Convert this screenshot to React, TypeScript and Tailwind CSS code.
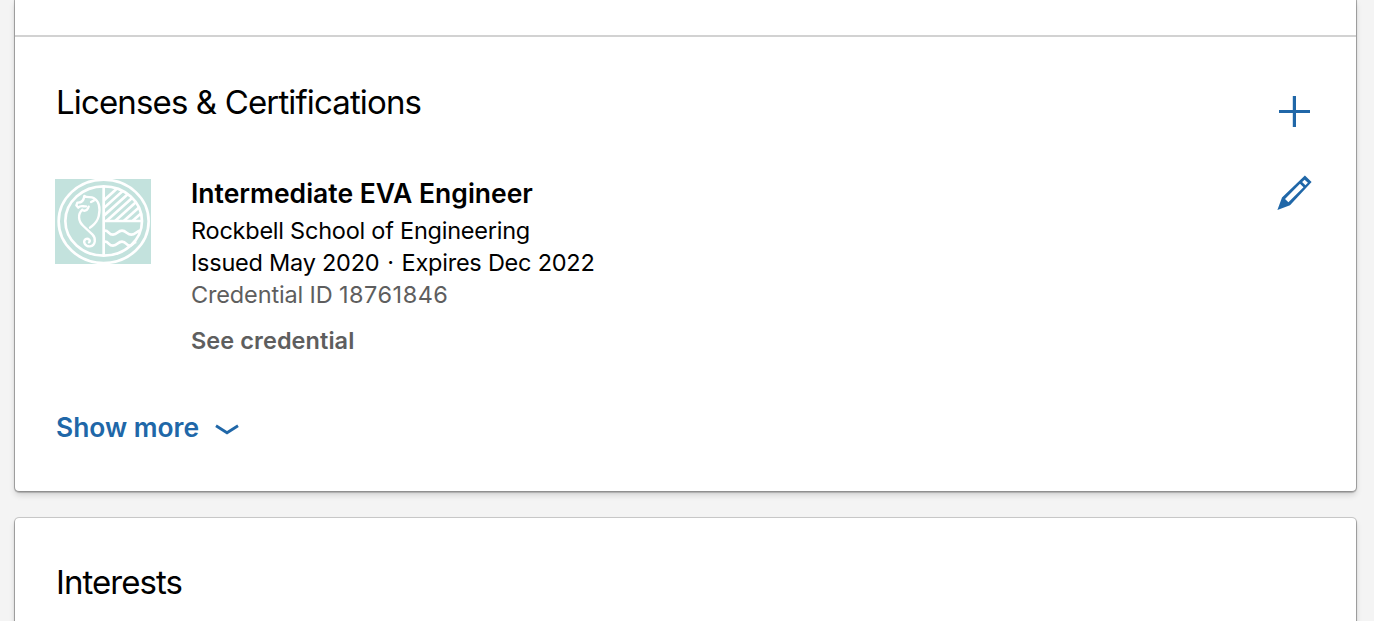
import { ReactNode } from "react";

const SchoolLogo = () => (
  <svg
    viewBox="0 0 288 255"
    className="w-24 h-[85px] shrink-0 bg-[#c3e2dd]"
    fill="none"
    stroke="#fff"
    strokeWidth="8"
  >
    <defs>
      <clipPath id="quarter">
        <path d="M150 20A113 104 0 0 1 259 123H150Z" />
      </clipPath>
    </defs>
    <ellipse cx="146" cy="127" rx="135" ry="125" />
    <ellipse cx="146" cy="126" rx="115" ry="104" />
    <path d="M146 22V230M146 126H261" />
    <g clipPath="url(#quarter)" strokeWidth="8">
      <path d="M140 70L200 16M140 93L222 19M140 116L240 26M152 128L248 42M178 128L260 54M204 128L270 69M230 128L276 87" />
    </g>
    <path d="M150 155C162 155 160 167 174 167S188 155 201 155 216 167 229 167 244 155 258 155M150 188C162 188 160 200 174 200S188 188 201 188 214 200 224 200 232 190 244 189" />
    <path
      d="M64 79L67 71C78 72 86 65 88 51C96 57 107 52 116 57C133 67 136 90 131 112C126 133 116 137 105 146M108 69L116 65M64 79L70 86C76 78 84 83 93 82M101 83C98 92 93 96 86 95M82 92C68 105 69 126 85 141L112 166C124 178 122 199 105 202C90 203 83 188 91 181C100 175 109 186 102 190"
      strokeWidth="7"
      strokeLinecap="round"
      strokeLinejoin="round"
    />
  </svg>
);

const PlusIcon = () => (
  <svg
    viewBox="0 0 32 32"
    className="w-8 h-8"
    stroke="currentColor"
    strokeWidth="3.2"
  >
    <path d="M15.4 0V31M0 15.5H31" />
  </svg>
);

const PencilIcon = () => (
  <svg
    viewBox="0 0 36 36"
    className="w-9 h-9"
    fill="currentColor"
    fillRule="evenodd"
  >
    <path d="M27.9.6L34.6 7L13 30.3L.4 35L5 22.6ZM23 8.8L8 24L11.4 27.3L26.5 12.2ZM27.6 4.7L25.1 7.1L28.4 10.3L30.9 7.8Z" />
  </svg>
);

const ChevronIcon = () => (
  <svg
    viewBox="0 0 24 12"
    className="mt-[5px] w-6 h-3"
    fill="none"
    stroke="currentColor"
    strokeWidth="2.8"
  >
    <path d="M1 1.8L12 8.8L23 1.8" />
  </svg>
);

const Card = ({
  className,
  children,
}: {
  className: string;
  children: ReactNode;
}) => (
  <section
    className={`bg-white shadow-[0_0_0_1px_rgba(0,0,0,0.16),0_1px_1px_1px_rgba(0,0,0,0.2),0_4px_6px_rgba(0,0,0,0.14)] ${className}`}
  >
    {children}
  </section>
);

const App = () => {
  return (
    <div className="h-[621px] overflow-hidden bg-[#f4f4f4] pl-[15px] pr-[18px] font-['Inter',sans-serif] text-black">
      <Card className="h-[491px] rounded-b-[4px]">
        <div className="h-[37px] border-b-2 border-[#d2d2d2]" />
        <div className="flex justify-between pl-10 pr-[43px]">
          <div>
            <h2 className="mt-[45px] ml-px text-[33px] leading-10 tracking-[-0.86px] whitespace-nowrap">
              Licenses &amp; Certifications
            </h2>
            <div className="mt-[57px] flex">
              <SchoolLogo />
              <div className="ml-[40px] text-[23.5px] leading-8 whitespace-nowrap">
                <h3 className="-mt-[2px] mb-[6px] text-[26.5px] font-semibold leading-8">
                  Intermediate EVA Engineer
                </h3>
                <p className="tracking-[-0.24px]">
                  Rockbell School of Engineering
                </p>
                <p className="tracking-[-0.24px]">
                  Issued May 2020<span className="mx-[1.5px]"> · </span>Expires
                  Dec 2022
                </p>
                <p className="text-[#5e5e5e] tracking-[-0.15px]">
                  Credential ID{" "}
                  <span className="tracking-[0.5px]">18761846</span>
                </p>
                <a className="mt-[14px] block font-semibold tracking-[0.07px] text-[#5e5e5e]">
                  See credential
                </a>
              </div>
            </div>
            <button className="mt-[54px] ml-px flex items-center gap-4 text-[26.4px] font-semibold leading-8 text-[#2067a8]">
              Show more
              <ChevronIcon />
            </button>
          </div>
          <div className="mt-[59px] flex flex-col items-center gap-[47px] text-[#2067a8]">
            <PlusIcon />
            <PencilIcon />
          </div>
        </div>
      </Card>
      <Card className="mt-[27px] h-[200px] rounded-t-[4px] pt-[44px] pl-[41px]">
        <h2 className="text-[33px] leading-10 tracking-[-0.95px]">Interests</h2>
      </Card>
    </div>
  );
};

export default App;
